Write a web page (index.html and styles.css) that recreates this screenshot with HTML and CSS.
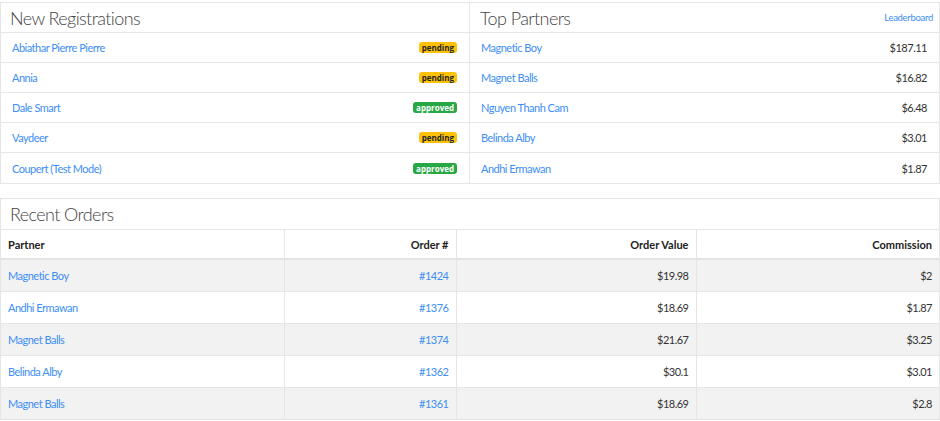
FILE: index.html
```html
<!DOCTYPE html>
<html>
<head>
<meta charset="utf-8">
<link rel="stylesheet" href="styles.css">
</head>
<body>
<div class="card split">
  <section class="panel">
    <header class="panel-head"><h2>New Registrations</h2></header>
    <ul class="list">
      <li><a href="#">Abiathar Pierre Pierre</a><span class="badge pending">pending</span></li>
      <li><a href="#">Annia</a><span class="badge pending">pending</span></li>
      <li><a href="#">Dale Smart</a><span class="badge approved">approved</span></li>
      <li><a href="#">Vaydeer</a><span class="badge pending">pending</span></li>
      <li><a href="#">Coupert (Test Mode)</a><span class="badge approved">approved</span></li>
    </ul>
  </section>
  <section class="panel">
    <header class="panel-head"><h2>Top Partners</h2><a class="small-link" href="#">Leaderboard</a></header>
    <ul class="list">
      <li><a href="#">Magnetic Boy</a><span class="amount">$187.11</span></li>
      <li><a href="#">Magnet Balls</a><span class="amount">$16.82</span></li>
      <li><a href="#">Nguyen Thanh Cam</a><span class="amount">$6.48</span></li>
      <li><a href="#">Belinda Alby</a><span class="amount">$3.01</span></li>
      <li><a href="#">Andhi Ermawan</a><span class="amount">$1.87</span></li>
    </ul>
  </section>
</div>
<div class="card orders">
  <header class="panel-head"><h2>Recent Orders</h2></header>
  <table class="table">
    <colgroup><col class="c1"><col class="c2"><col class="c3"><col class="c4"></colgroup>
    <thead>
      <tr><th class="left">Partner</th><th>Order #</th><th>Order Value</th><th>Commission</th></tr>
    </thead>
    <tbody>
      <tr><td class="left"><a href="#">Magnetic Boy</a></td><td><a href="#">#1424</a></td><td>$19.98</td><td>$2</td></tr>
      <tr><td class="left"><a href="#">Andhi Ermawan</a></td><td><a href="#">#1376</a></td><td>$18.69</td><td>$1.87</td></tr>
      <tr><td class="left"><a href="#">Magnet Balls</a></td><td><a href="#">#1374</a></td><td>$21.67</td><td>$3.25</td></tr>
      <tr><td class="left"><a href="#">Belinda Alby</a></td><td><a href="#">#1362</a></td><td>$30.1</td><td>$3.01</td></tr>
      <tr><td class="left"><a href="#">Magnet Balls</a></td><td><a href="#">#1361</a></td><td>$18.69</td><td>$2.8</td></tr>
    </tbody>
  </table>
</div>
</body>
</html>
```
FILE: styles.css
```css
* { box-sizing: border-box; }
html, body { margin: 0; padding: 0; }
body {
  background: #fff;
  font-family: "Lato", "Open Sans", sans-serif;
  font-size: 11px;
  letter-spacing: -0.5px;
  color: #333;
  padding-top: 2px;
  width: 940px;
}
a { color: #3d8ef5; text-decoration: none; }
.card {
  border: 1px solid #e6e6e6;
  background: #fff;
  width: 940px;
}
.split {
  display: grid;
  grid-template-columns: 468px 1fr;
  height: 182px;
}
.split .panel + .panel { border-left: 1px solid #e6e6e6; }
.panel-head {
  height: 30px;
  display: flex;
  align-items: center;
  justify-content: space-between;
  padding: 0 6px 0 9px;
  border-bottom: 1px solid #e6e6e6;
}
.panel + .panel .panel-head { padding-left: 10px; }
.panel-head h2 {
  margin: 0;
  font-size: 18px;
  font-weight: 300;
  letter-spacing: -0.6px;
  color: #444;
}
.small-link { font-size: 9.5px; letter-spacing: -0.3px; }
.list { list-style: none; margin: 0; padding: 0; }
.list li {
  height: 30px;
  display: flex;
  align-items: center;
  justify-content: space-between;
  padding: 0 12px 0 11px;
  border-bottom: 1px solid #e6e6e6;
}
.list li:last-child { border-bottom: none; }
.amount { color: #333; }
.badge {
  font-family: "Open Sans", sans-serif;
  font-size: 8px;
  font-weight: 700;
  letter-spacing: 0;
  line-height: 11px;
  padding: 0 3px;
  border-radius: 3px;
}
.pending { background: #ffc107; color: #212529; }
.approved { background: #28a745; color: #fff; }
.orders { margin-top: 14px; }
.orders .panel-head { height: 31px; padding-left: 9px; }
.table {
  width: 100%;
  border-collapse: collapse;
  table-layout: fixed;
}
.c1 { width: 283px; }
.c2 { width: 172px; }
.c3 { width: 240px; }
.table th, .table td {
  text-align: right;
  padding: 0 7px;
  border-left: 1px solid #e6e6e6;
  border-bottom: 1px solid #e6e6e6;
}
.table th:first-child, .table td:first-child { border-left: none; }
.table th { height: 29px; font-weight: 700; letter-spacing: 0; color: #222; border-bottom: 2px solid #e3e3e3; }
.table td { height: 32px; }
.table tbody tr:nth-child(odd) { background: #f2f2f2; }
.table tbody tr:last-child td { border-bottom: none; }
.table .left { text-align: left; }
```
